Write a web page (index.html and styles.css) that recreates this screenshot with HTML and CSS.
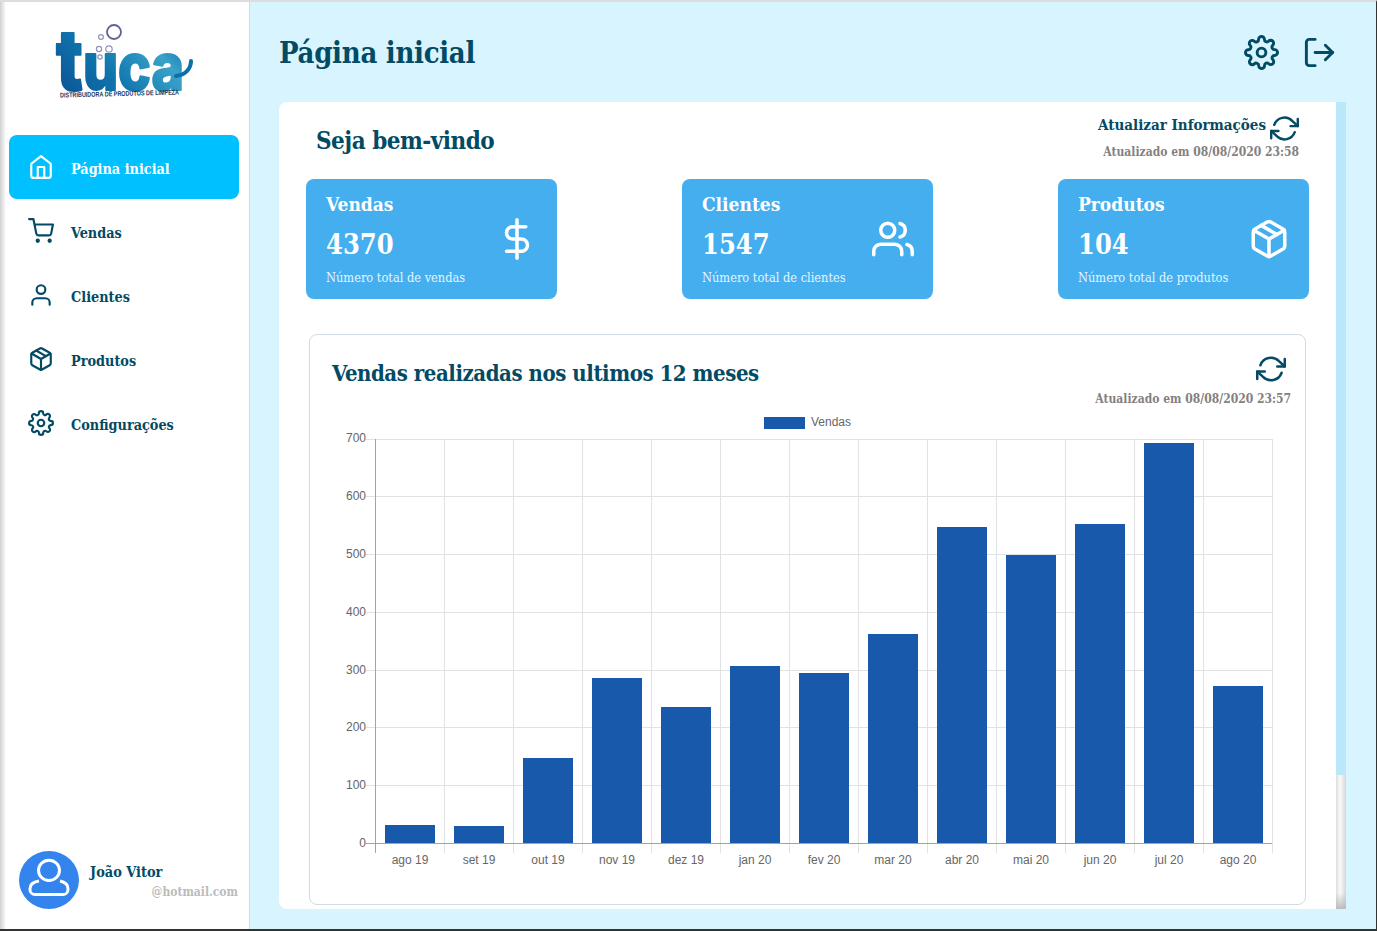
FILE: index.html
```html
<!DOCTYPE html>
<html lang="pt-BR">

<head>
    <meta charset="UTF-8">
    <meta name="viewport" content="width=device-width, initial-scale=1.0">
    <title>Página inicial</title>
    <link rel="stylesheet" href="styles.css">
</head>

<body>
    <svg class="icon-defs" width="0" height="0">
        <symbol id="i-home" viewBox="0 0 24 24">
            <path d="M3 9l9-7 9 7v11a2 2 0 0 1-2 2H5a2 2 0 0 1-2-2z" />
            <polyline points="9 22 9 12 15 12 15 22" />
        </symbol>
        <symbol id="i-cart" viewBox="0 0 24 24">
            <circle cx="9" cy="21" r="1" />
            <circle cx="20" cy="21" r="1" />
            <path d="M1 1h4l2.68 13.39a2 2 0 0 0 2 1.61h9.72a2 2 0 0 0 2-1.61L23 6H6" />
        </symbol>
        <symbol id="i-user" viewBox="0 0 24 24">
            <path d="M20 21v-2a4 4 0 0 0-4-4H8a4 4 0 0 0-4 4v2" />
            <circle cx="12" cy="7" r="4" />
        </symbol>
        <symbol id="i-users" viewBox="0 0 24 24">
            <path d="M17 21v-2a4 4 0 0 0-4-4H5a4 4 0 0 0-4 4v2" />
            <circle cx="9" cy="7" r="4" />
            <path d="M23 21v-2a4 4 0 0 0-3-3.87" />
            <path d="M16 3.13a4 4 0 0 1 0 7.75" />
        </symbol>
        <symbol id="i-box" viewBox="0 0 24 24">
            <line x1="16.5" y1="9.4" x2="7.5" y2="4.21" />
            <path d="M21 16V8a2 2 0 0 0-1-1.73l-7-4a2 2 0 0 0-2 0l-7 4A2 2 0 0 0 3 8v8a2 2 0 0 0 1 1.73l7 4a2 2 0 0 0 2 0l7-4A2 2 0 0 0 21 16z" />
            <polyline points="3.27 6.96 12 12.01 20.73 6.96" />
            <line x1="12" y1="22.08" x2="12" y2="12" />
        </symbol>
        <symbol id="i-gear" viewBox="0 0 24 24">
            <circle cx="12" cy="12" r="3" />
            <path d="M19.4 15a1.65 1.65 0 0 0 .33 1.82l.06.06a2 2 0 0 1 0 2.83 2 2 0 0 1-2.83 0l-.06-.06a1.65 1.65 0 0 0-1.82-.33 1.65 1.65 0 0 0-1 1.51V21a2 2 0 0 1-2 2 2 2 0 0 1-2-2v-.09A1.65 1.65 0 0 0 9 19.4a1.65 1.65 0 0 0-1.82.33l-.06.06a2 2 0 0 1-2.83 0 2 2 0 0 1 0-2.83l.06-.06a1.65 1.65 0 0 0 .33-1.82 1.65 1.65 0 0 0-1.51-1H3a2 2 0 0 1-2-2 2 2 0 0 1 2-2h.09A1.65 1.65 0 0 0 4.6 9a1.65 1.65 0 0 0-.33-1.82l-.06-.06a2 2 0 0 1 0-2.83 2 2 0 0 1 2.83 0l.06.06a1.65 1.65 0 0 0 1.82.33H9a1.65 1.65 0 0 0 1-1.51V3a2 2 0 0 1 2-2 2 2 0 0 1 2 2v.09a1.65 1.65 0 0 0 1 1.51 1.65 1.65 0 0 0 1.82-.33l.06-.06a2 2 0 0 1 2.83 0 2 2 0 0 1 0 2.83l-.06.06a1.65 1.65 0 0 0-.33 1.82V9a1.65 1.65 0 0 0 1.51 1H21a2 2 0 0 1 2 2 2 2 0 0 1-2 2h-.09a1.65 1.65 0 0 0-1.51 1z" />
        </symbol>
        <symbol id="i-logout" viewBox="0 0 24 24">
            <path d="M9 21H5a2 2 0 0 1-2-2V5a2 2 0 0 1 2-2h4" />
            <polyline points="16 17 21 12 16 7" />
            <line x1="21" y1="12" x2="9" y2="12" />
        </symbol>
        <symbol id="i-refresh" viewBox="0 0 24 24">
            <polyline points="23 4 23 10 17 10" />
            <polyline points="1 20 1 14 7 14" />
            <path d="M3.51 9a9 9 0 0 1 14.85-3.36L23 10M1 14l4.64 4.36A9 9 0 0 0 20.49 15" />
        </symbol>
        <symbol id="i-dollar" viewBox="0 0 24 24">
            <line x1="12" y1="1" x2="12" y2="23" />
            <path d="M17 5H9.5a3.5 3.5 0 0 0 0 7h5a3.5 3.5 0 0 1 0 7H6" />
        </symbol>
    </svg>

    <div class="app">
        <aside class="sidebar">
            <svg class="logo" viewBox="55 25 138 75" width="138" height="75">
                <defs>
                    <linearGradient id="logo-fill" x1="0" y1="1" x2="1" y2="0.3">
                        <stop offset="0" stop-color="#0a4a8c" />
                        <stop offset="0.45" stop-color="#0f74ad" />
                        <stop offset="0.8" stop-color="#3aa3c9" />
                        <stop offset="1" stop-color="#0e6ea8" />
                    </linearGradient>
                </defs>
                <text class="logo-word" x="56" y="90" textLength="128" lengthAdjust="spacingAndGlyphs" fill="url(#logo-fill)" stroke="url(#logo-fill)"><tspan class="logo-t">t</tspan>uca</text>
                <path class="logo-tail" d="M176 76c9-1 15-7 15-15" />
                <circle class="logo-bubble big" cx="114" cy="32" r="7" />
                <circle class="logo-bubble" cx="101" cy="37" r="2.4" />
                <circle class="logo-bubble" cx="99" cy="49" r="2.6" />
                <circle class="logo-bubble" cx="109" cy="49" r="3.2" />
                <circle class="logo-bubble" cx="100" cy="57" r="2.2" />
                <text class="logo-small" x="60" y="96" textLength="119" lengthAdjust="spacingAndGlyphs" transform="rotate(-1.5 120 93)">DISTRIBUIDORA DE PRODUTOS DE LIMPEZA</text>
            </svg>

            <nav class="menu">
                <a class="menu-item active"><svg class="icon"><use href="#i-home" /></svg><span>Página inicial</span></a>
                <a class="menu-item"><svg class="icon"><use href="#i-cart" /></svg><span>Vendas</span></a>
                <a class="menu-item"><svg class="icon"><use href="#i-user" /></svg><span>Clientes</span></a>
                <a class="menu-item"><svg class="icon"><use href="#i-box" /></svg><span>Produtos</span></a>
                <a class="menu-item"><svg class="icon"><use href="#i-gear" /></svg><span>Configurações</span></a>
            </nav>

            <div class="profile">
                <svg class="avatar" viewBox="0 0 60 60" width="60" height="58" preserveAspectRatio="none">
                    <circle cx="30" cy="30" r="30" fill="#3484ee" />
                    <circle cx="30" cy="20" r="10.5" class="avatar-line" />
                    <path d="M20 31c-6 1-9 4-9 8v1a5 5 0 0 0 5 5h28a5 5 0 0 0 5-5v-1c0-4-3-7-8-8" class="avatar-line" />
                </svg>
                <div class="profile-text">
                    <div class="profile-name">João Vitor</div>
                    <div class="profile-mail">@hotmail.com</div>
                </div>
            </div>
        </aside>

        <main class="main">
            <header class="topbar">
                <h1>Página inicial</h1>
                <div class="topbar-icons">
                    <svg class="icon icon-top"><use href="#i-gear" /></svg>
                    <svg class="icon icon-top"><use href="#i-logout" /></svg>
                </div>
            </header>

            <div class="panel">
                <div class="panel-body">
                    <div class="welcome">
                        <h2>Seja bem-vindo</h2>
                        <div class="refresh-info">
                            <div class="refresh-line"><span>Atualizar Informações</span><svg class="icon icon-refresh"><use href="#i-refresh" /></svg></div>
                            <div class="updated">Atualizado em 08/08/2020 23:58</div>
                        </div>
                    </div>

                    <div class="cards">
                        <div class="card">
                            <div>
                                <div class="card-title">Vendas</div>
                                <div class="card-number">4370</div>
                                <div class="card-sub">Número total de vendas</div>
                            </div>
                            <svg class="icon icon-card"><use href="#i-dollar" /></svg>
                        </div>
                        <div class="card">
                            <div>
                                <div class="card-title">Clientes</div>
                                <div class="card-number">1547</div>
                                <div class="card-sub">Número total de clientes</div>
                            </div>
                            <svg class="icon icon-card"><use href="#i-users" /></svg>
                        </div>
                        <div class="card">
                            <div>
                                <div class="card-title">Produtos</div>
                                <div class="card-number">104</div>
                                <div class="card-sub">Número total de produtos</div>
                            </div>
                            <svg class="icon icon-card"><use href="#i-box" /></svg>
                        </div>
                    </div>

                    <section class="chart-card">
                        <div class="chart-head">
                            <h3>Vendas realizadas nos ultimos 12 meses</h3>
                            <div class="chart-refresh">
                                <svg class="icon icon-refresh"><use href="#i-refresh" /></svg>
                                <div class="updated">Atualizado em 08/08/2020 23:57</div>
                            </div>
                        </div>

                        <svg class="chart" viewBox="310 410 995 460" width="995" height="460">
                            <rect class="bar" x="764" y="417" width="41" height="12" />
                            <text class="chart-text" x="811" y="426">Vendas</text>

                            <g class="grid">
                                <line x1="366" x2="1272" y1="439.5" y2="439.5" />
                                <line x1="366" x2="1272" y1="496.5" y2="496.5" />
                                <line x1="366" x2="1272" y1="554.5" y2="554.5" />
                                <line x1="366" x2="1272" y1="612.5" y2="612.5" />
                                <line x1="366" x2="1272" y1="670.5" y2="670.5" />
                                <line x1="366" x2="1272" y1="727.5" y2="727.5" />
                                <line x1="366" x2="1272" y1="785.5" y2="785.5" />
                                <line x1="444.5" x2="444.5" y1="439" y2="853" />
                                <line x1="513.5" x2="513.5" y1="439" y2="853" />
                                <line x1="582.5" x2="582.5" y1="439" y2="853" />
                                <line x1="651.5" x2="651.5" y1="439" y2="853" />
                                <line x1="720.5" x2="720.5" y1="439" y2="853" />
                                <line x1="789.5" x2="789.5" y1="439" y2="853" />
                                <line x1="858.5" x2="858.5" y1="439" y2="853" />
                                <line x1="927.5" x2="927.5" y1="439" y2="853" />
                                <line x1="996.5" x2="996.5" y1="439" y2="853" />
                                <line x1="1065.5" x2="1065.5" y1="439" y2="853" />
                                <line x1="1134.5" x2="1134.5" y1="439" y2="853" />
                                <line x1="1203.5" x2="1203.5" y1="439" y2="853" />
                                <line x1="1272.5" x2="1272.5" y1="439" y2="853" />
                            </g>

                            <g>
                                <rect class="bar" x="385" y="825" width="50" height="18" />
                                <rect class="bar" x="454" y="826" width="50" height="17" />
                                <rect class="bar" x="523" y="758" width="50" height="85" />
                                <rect class="bar" x="592" y="678" width="50" height="165" />
                                <rect class="bar" x="661" y="707" width="50" height="136" />
                                <rect class="bar" x="730" y="666" width="50" height="177" />
                                <rect class="bar" x="799" y="673" width="50" height="170" />
                                <rect class="bar" x="868" y="634" width="50" height="209" />
                                <rect class="bar" x="937" y="527" width="50" height="316" />
                                <rect class="bar" x="1006" y="555" width="50" height="288" />
                                <rect class="bar" x="1075" y="524" width="50" height="319" />
                                <rect class="bar" x="1144" y="443" width="50" height="400" />
                                <rect class="bar" x="1213" y="686" width="50" height="157" />
                            </g>

                            <g class="axis">
                                <line x1="375.5" x2="375.5" y1="439" y2="853" />
                                <line x1="366" x2="1272" y1="843.5" y2="843.5" />
                            </g>

                            <g class="chart-text y-labels">
                                <text x="366" y="442">700</text>
                                <text x="366" y="500">600</text>
                                <text x="366" y="558">500</text>
                                <text x="366" y="616">400</text>
                                <text x="366" y="674">300</text>
                                <text x="366" y="731">200</text>
                                <text x="366" y="789">100</text>
                                <text x="366" y="847">0</text>
                            </g>

                            <g class="chart-text x-labels">
                                <text x="410" y="864">ago 19</text>
                                <text x="479" y="864">set 19</text>
                                <text x="548" y="864">out 19</text>
                                <text x="617" y="864">nov 19</text>
                                <text x="686" y="864">dez 19</text>
                                <text x="755" y="864">jan 20</text>
                                <text x="824" y="864">fev 20</text>
                                <text x="893" y="864">mar 20</text>
                                <text x="962" y="864">abr 20</text>
                                <text x="1031" y="864">mai 20</text>
                                <text x="1100" y="864">jun 20</text>
                                <text x="1169" y="864">jul 20</text>
                                <text x="1238" y="864">ago 20</text>
                            </g>
                        </svg>
                    </section>
                </div>
                <div class="scrollbar">
                    <div class="scrollbar-thumb"></div>
                </div>
            </div>
        </main>
    </div>
</body>

</html>
```

FILE: styles.css
```css
* {
    box-sizing: border-box;
}

body {
    margin: 0;
    font-family: "DejaVu Serif Condensed", "DejaVu Serif", serif;
    color: #034a64;
    background-color: #d8f4ff;
}

h1,
h2,
h3 {
    margin: 0;
    font-weight: bold;
}

.icon-defs {
    position: absolute;
}

.icon {
    flex: none;
    width: 26px;
    height: 26px;
    fill: none;
    stroke: currentColor;
    stroke-width: 2;
    stroke-linecap: round;
    stroke-linejoin: round;
}

.app {
    display: flex;
    height: 100vh;
    border-top: 2px solid #ddd;
    border-bottom: 2px solid #333;
    border-right: 1px solid #333;
    overflow: hidden;
}

/* sidebar */

.sidebar {
    display: flex;
    flex-direction: column;
    flex: none;
    width: 250px;
    padding-bottom: 20px;
    background: linear-gradient(90deg, #d0d0d0 0, #fff 6px);
    border-right: 1px solid #bfe0ee;
}

.logo {
    display: block;
    flex: none;
    margin: 23px 0 0 55px;
    overflow: visible;
}

.logo-word {
    font-family: "Inter", sans-serif;
    font-size: 66px;
    font-weight: 800;
    stroke-width: 2;
    stroke-linejoin: round;
}

.logo-t {
    font-size: 84px;
}

.logo-tail {
    fill: none;
    stroke: #0e6ea8;
    stroke-width: 4;
    stroke-linecap: round;
}

.logo-bubble {
    fill: #fff;
    stroke: #8f93bd;
    stroke-width: 1.2;
}

.logo-bubble.big {
    stroke: #5d6298;
    stroke-width: 1.8;
}

.logo-small {
    font-family: "Liberation Sans", sans-serif;
    font-size: 7px;
    font-weight: bold;
    fill: #17395f;
}

.menu {
    margin-top: 35px;
}

.menu-item {
    display: flex;
    align-items: center;
    gap: 17px;
    height: 64px;
    margin: 0 10px 0 9px;
    padding-left: 19px;
    font-size: 14.3px;
    font-weight: bold;
    border-radius: 8px;
}

.menu-item span {
    padding-top: 4px;
}

.menu-item.active {
    color: #fff;
    background-color: #00c0ff;
}

.profile {
    display: flex;
    gap: 11px;
    margin-top: auto;
    padding-left: 19px;
}

.avatar {
    display: block;
    flex: none;
}

.avatar-line {
    fill: none;
    stroke: #fff;
    stroke-width: 3;
}

.profile-text {
    flex: 1;
    padding: 12px 11px 0 0;
}

.profile-name {
    font-size: 14.4px;
    font-weight: bold;
}

.profile-mail {
    margin-top: 5px;
    font-size: 12px;
    font-weight: bold;
    color: #bbb;
    text-align: right;
}

/* main */

.main {
    display: flex;
    flex-direction: column;
    flex: 1;
    min-width: 0;
    padding: 0 30px 20px 29px;
}

.topbar {
    display: flex;
    align-items: center;
    justify-content: space-between;
    flex: none;
    height: 100px;
}

.topbar h1 {
    margin-top: 2px;
    font-size: 29px;
    letter-spacing: -0.3px;
}

.topbar-icons {
    display: flex;
    gap: 23px;
    margin-right: 9px;
}

.icon-top {
    width: 35px;
    height: 35px;
}

.panel {
    display: flex;
    flex: 1;
    min-height: 0;
    background-color: #fff;
    border-radius: 8px 0 0 8px;
    overflow: hidden;
}

.panel-body {
    flex: 1;
    min-width: 0;
    padding: 0 27px 0 27px;
}

.scrollbar {
    flex: none;
    width: 10px;
    background: linear-gradient(180deg, transparent 98%, #bbb), linear-gradient(90deg, #ddd, #fafafa 40%, #d6d6d6);
}

.scrollbar-thumb {
    height: 673px;
    background-color: #b8e8fa;
    border-radius: 0 0 4px 4px;
}

.welcome {
    display: flex;
    align-items: flex-start;
    justify-content: space-between;
    height: 77px;
    padding: 12px 10px 0 10px;
}

.welcome h2 {
    margin-top: 12px;
    font-size: 24px;
    letter-spacing: -0.5px;
}

.refresh-info {
    text-align: right;
}

.refresh-line {
    display: flex;
    align-items: flex-start;
    justify-content: flex-end;
    gap: 4px;
    font-size: 15px;
    font-weight: bold;
}

.refresh-line span {
    padding-top: 2px;
}

.refresh-line .icon-refresh {
    width: 29px;
    height: 29px;
}

.icon-refresh {
    width: 30px;
    height: 30px;
}

.updated {
    font-size: 12px;
    font-weight: bold;
    color: #857f7f;
}

.refresh-info .updated {
    margin-top: 2px;
}

.cards {
    display: flex;
    justify-content: space-between;
}

.card {
    display: flex;
    align-items: center;
    justify-content: space-between;
    width: 251px;
    height: 120px;
    padding: 0 19px 0 20px;
    color: #fff;
    background-color: #44aeef;
    border-radius: 8px;
}

.card-title {
    font-size: 19px;
    font-weight: bold;
}

.card-number {
    margin-top: 14px;
    font-size: 27px;
    font-weight: bold;
}

.card-sub {
    margin-top: 10px;
    font-size: 12.7px;
    color: #e6f5fe;
}

.icon-card {
    width: 42px;
    height: 42px;
}

.chart-card {
    height: 571px;
    margin: 35px 3px 0;
    background-color: #fff;
    border: 1px solid #cddde4;
    border-radius: 8px;
}

.chart-head {
    display: flex;
    align-items: flex-start;
    justify-content: space-between;
    height: 75px;
    padding: 19px 14px 0 22px;
}

.chart-head h3 {
    margin-top: 6px;
    font-size: 22px;
    letter-spacing: -0.45px;
}

.chart-refresh {
    display: flex;
    flex-direction: column;
    align-items: flex-end;
}

.chart-refresh .icon-refresh {
    margin-right: 5px;
}

.chart-refresh .updated {
    margin-top: 8px;
}

.chart {
    display: block;
}

.chart-text {
    font-family: "Liberation Sans", sans-serif;
    font-size: 12px;
    fill: #666;
}

.y-labels {
    text-anchor: end;
}

.x-labels {
    text-anchor: middle;
}

.grid line {
    stroke: #e0e3e4;
    stroke-width: 1;
}

.axis line {
    stroke: #a3a3a3;
    stroke-width: 1;
}

.bar {
    fill: #1859ac;
}
```
